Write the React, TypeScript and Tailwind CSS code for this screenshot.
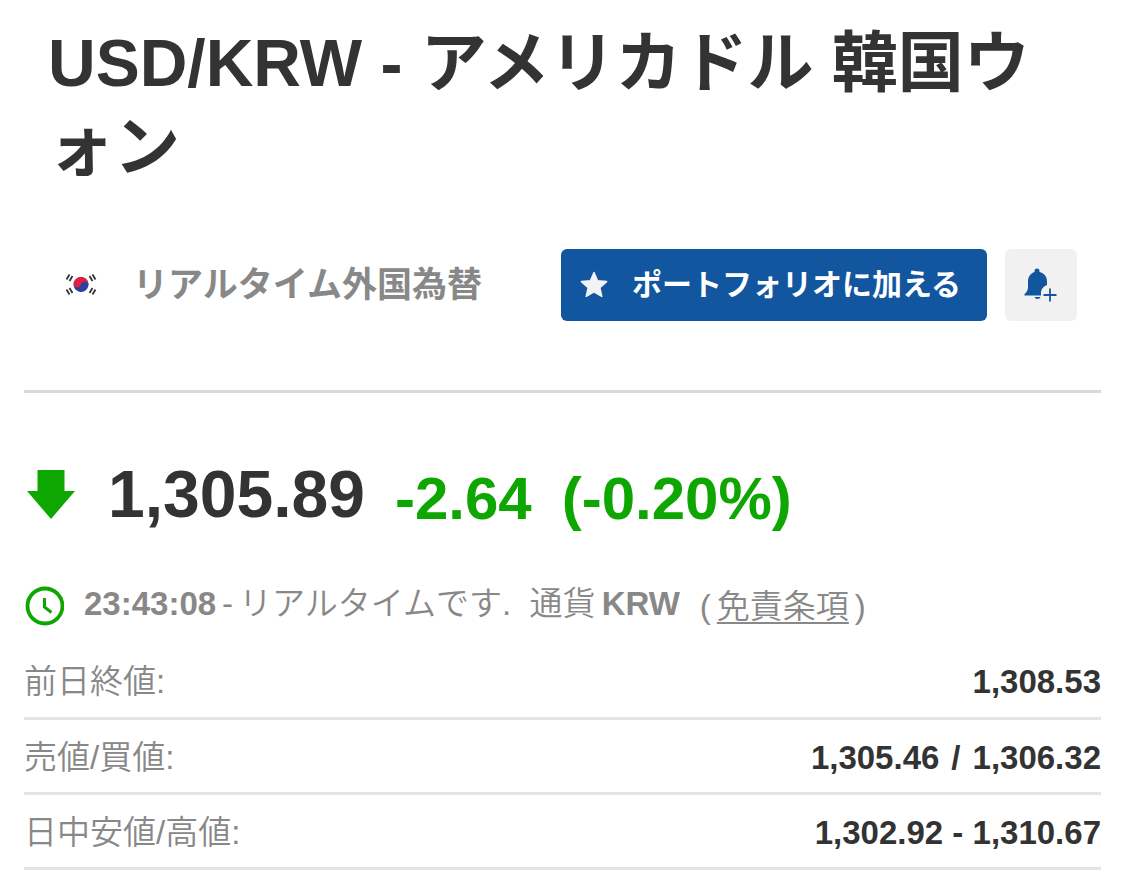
import { type ReactNode } from "react";

type Linha = {
    label: string
    value: ReactNode
}

const linhas: Linha[] = [
    { label: '前日終値:', value: '1,308.53' },
    {
        label: '売値/買値:',
        value: (
            <span className="flex justify-end gap-3">
                <span>1,305.46</span>
                <span>/</span>
                <span>1,306.32</span>
            </span>
        ),
    },
    { label: '日中安値/高値:', value: '1,302.92 - 1,310.67' },
]

function BandeiraCoreia() {
    return (
        <svg viewBox="0 0 36 24" className="w-9 h-6 shrink-0" role="img" aria-label="韓国">
            <rect width="36" height="24" fill="#fff" />
            <g transform="rotate(15 18 11.500)">
                <circle cx="18" cy="11.500" r="7.500" fill="#2a3f9e" />
                <path d="M10.500 11.500a7.500 7.500 0 0 1 15 0a3.750 3.750 0 0 0-7.500 0a3.750 3.750 0 0 1-7.500 0z" fill="#e0203c" />
            </g>
            <g stroke="#333" strokeWidth="1.8">
                <path d="M3.500 6.500l3-5M6.500 8l3-5" />
                <path d="M32.500 6.500l-3-5M29.500 8l-3-5" />
                <path d="M3.500 16.500l3 5M6.500 15l3 5" />
                <path d="M32.500 16.500l-3 5M29.500 15l-3 5" />
            </g>
        </svg>
    )
}

function Estrela() {
    return (
        <svg viewBox="0 0 28 28" className="w-7 h-7 shrink-0" aria-hidden="true">
            <path
                d="M14 1.500l3.600 8.300 9 .8-6.800 6 2 8.800L14 20.800l-7.800 4.600 2-8.800-6.800-6 9-.8z"
                fill="#f3f3f5"
                stroke="#f3f3f5"
                strokeWidth="1.500"
                strokeLinejoin="round"
            />
        </svg>
    )
}

function Sino() {
    return (
        <svg viewBox="0 0 34 34" className="w-[34px] h-[34px]" aria-hidden="true">
            <g fill="#1256a0">
                <path d="M10.500 3a2.500 2.500 0 0 1 5 0v1C20 5 23 8.500 23 13.500v3.500c-2.800 1-5.500 3.500-6 7v3.500H0.500v-1.500c2.500-2 3.500-4.500 3.500-7.500v-5c0-5 3-8.500 6.500-9.500z" />
                <path d="M10.500 29h6c-.5 2.500-5.500 2.500-6 0z" />
            </g>
            <path d="M26 20.500v13M19.500 27h13" stroke="#1256a0" strokeWidth="1.800" />
        </svg>
    )
}

function App() {
    return (
        <main className="bg-white px-6 font-['Liberation_Sans','Noto_Sans_CJK_JP',sans-serif] text-[#333333]">
            <header className="px-6 pt-[21px]">
                <h1 className="text-[66px] leading-[84px] font-bold">
                    USD/KRW - アメリカドル 韓国ウォン
                </h1>
            </header>

            <div className="flex items-center pl-[39px] pr-6 mt-[60px]">
                <BandeiraCoreia />
                <span className="ml-[34px] text-[35px] leading-[42px] font-bold text-[#888888]">リアルタイム外国為替</span>
                <div className="flex gap-[18px] ml-auto">
                    <button type="button" className="flex items-center h-[72px] pl-[19px] pr-[26px] gap-6 rounded-md bg-[#1256a0] text-white text-[30px] leading-10 font-bold">
                        <Estrela />
                        <span className="whitespace-nowrap">ポートフォリオに加える</span>
                    </button>
                    <button type="button" aria-label="アラートを作成" className="flex items-center justify-center w-[72px] h-[72px] rounded-md bg-[#f1f1f1]">
                        <Sino />
                    </button>
                </div>
            </div>

            <hr className="mt-[69px] border-0 h-[3px] bg-[#d9d9d9]" />

            <section>
                <div className="flex items-center mt-[66px] leading-none font-bold">
                    <svg viewBox="0 0 50 50" className="w-[50px] h-[50px] ml-[2px] mr-8" role="img" aria-label="下落">
                        <path d="M11.500 1h27v21H49L25 50 1 22h10.500z" fill="#0ea600" />
                    </svg>
                    <span className="text-[66px]">1,305.89</span>
                    <div className="flex gap-[30px] ml-[30px] pt-[10px] text-[60px] text-[#0ea600]">
                        <span>-2.64</span>
                        <span>(-0.20%)</span>
                    </div>
                </div>

                <div className="flex items-center mt-[52px] text-[33px] leading-10 text-[#888888]">
                    <svg viewBox="0 0 40 40" className="w-10 h-10 mt-1 mr-5" fill="none" stroke="#0ea600" aria-hidden="true">
                        <circle cx="21" cy="20" r="17.500" strokeWidth="3.800" />
                        <path d="M20.500 12v9l7 5.500" strokeWidth="3" />
                    </svg>
                    <p className="flex items-baseline gap-[6px] font-[350] whitespace-pre">
                        <time className="font-bold">23:43:08</time>
                        <span>-</span>
                        <span>リアルタイムです.  通貨</span>
                        <strong className="font-bold">KRW</strong>
                    </p>
                    <p className="ml-5 pt-[6px] font-[350]">
                        (<a href="#" className="mx-[6px] underline decoration-2 underline-offset-4">免責条項</a>)
                    </p>
                </div>
            </section>

            <table className="w-full mt-4 text-[33px] leading-10">
                <tbody>
                    {linhas.map((linha) => (
                        <tr key={linha.label} className="h-[75px] border-b-3 border-[#e4e4e4]">
                            <th scope="row" className="pt-1 text-left font-[350] text-[#888888]">{linha.label}</th>
                            <td className="pt-1 text-right font-bold">{linha.value}</td>
                        </tr>
                    ))}
                </tbody>
            </table>
        </main>
    );
}

export default App;
